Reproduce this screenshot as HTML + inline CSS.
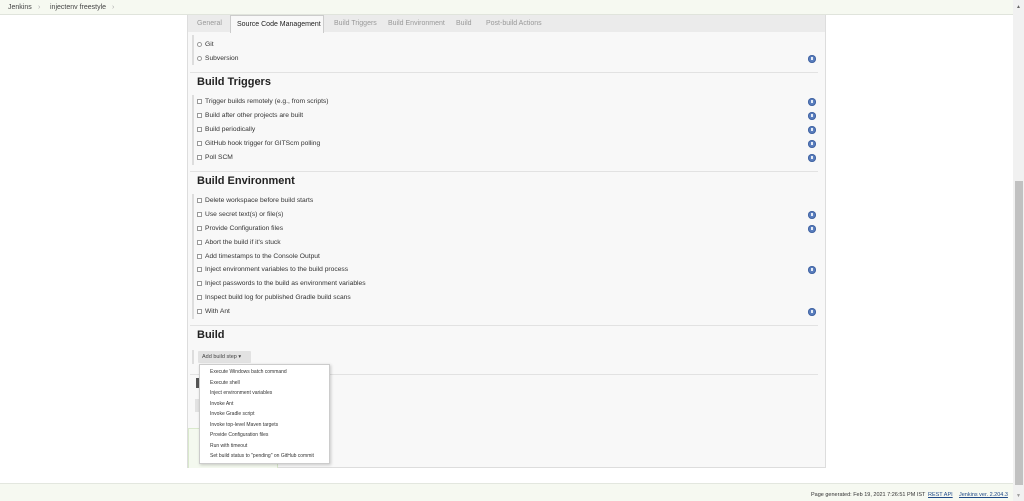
<!DOCTYPE html>
<html><head><meta charset="utf-8"><style>
*{margin:0;padding:0;box-sizing:border-box}
body{width:1024px;height:501px;overflow:hidden;background:#fff;font-family:"Liberation Sans",sans-serif;color:#333;position:relative}
.abs{position:absolute}
.crumb{left:0;top:0;width:1013px;height:15px;background:#f6f9f1;border-bottom:1px solid #e0e4dc;font-size:7px;color:#444}
.crumb span{position:absolute;top:4px}
.panel{left:187px;top:15px;width:639px;height:453px;background:#f8f8f8;border:1px solid #ddd;border-top:none}
.tabs{left:188px;top:15px;width:637px;height:17px;background:#ebebeb;font-size:7px;color:#999}
.tabs span{position:absolute;top:5px}
.tab-act{position:absolute;left:42px;top:0;width:94px;height:18px;background:#f8f8f8;border:1px solid #ccc;border-bottom:none;color:#222}
.item{position:absolute;left:197px;font-size:6.7px;color:#333}
.item i{display:inline-block;width:5px;height:5px;border:1px solid #999;margin-right:3px;vertical-align:-0.5px;background:#fff}
.item i.r{border-radius:50%}
.h{position:absolute;left:197px;font-size:11px;font-weight:bold;color:#222}
.sep{position:absolute;left:190px;width:628px;height:1px;background:#e2e2e2}
.bar{position:absolute;left:192px;width:2px;background:#ddd}
.help{position:absolute;left:808px;width:8px;height:8px;border-radius:50%;background:#5b7fbf;box-shadow:inset 0 0 0 1px #4466a3}
.help:after{content:"";position:absolute;left:3px;top:2px;width:2px;height:3px;background:#e4ebf6}
.btn{position:absolute;left:198px;top:351px;width:53px;height:12px;background:#e2e2e2;border-radius:1px;font-size:5.5px;color:#444;padding:3px 0 0 4px}
.menu{left:199px;top:364px;width:131px;height:100px;background:#fff;border:1px solid #ccc;box-shadow:1px 1px 3px rgba(0,0,0,.2);font-size:5px;color:#333}
.menu div{position:absolute;left:10px}
.foot{left:0;top:483px;width:1013px;height:18px;background:#f6f9f1;border-top:1px solid #e3e7df;font-size:5.5px;color:#333}
.foot a{color:#204a87;text-decoration:underline;position:absolute;top:8px}
.sb{left:1013px;top:0;width:11px;height:501px;background:#f1f1f1}
</style></head><body>
<div class="abs crumb"><span style="left:8px">Jenkins</span><span style="left:38px;color:#aaa">›</span><span style="left:50px">injectenv freestyle</span><span style="left:112px;color:#aaa">›</span></div>

<div class="abs panel"></div>
<div class="abs tabs">
<span style="left:9px">General</span>
<div class="tab-act"><span style="position:absolute;left:6px;top:5px">Source Code Management</span></div>
<span style="left:146px">Build Triggers</span>
<span style="left:200px">Build Environment</span>
<span style="left:268px">Build</span>
<span style="left:298px">Post-build Actions</span>
</div>

<div class="bar" style="top:35px;height:30px"></div>
<div class="item" style="top:41px"><i class="r"></i>Git</div>
<div class="item" style="top:55px"><i class="r"></i>Subversion</div>
<div class="help" style="top:55px"></div>
<div class="sep" style="top:72px"></div>

<div class="h" style="top:76px">Build Triggers</div>
<div class="bar" style="top:95px;height:70px"></div>
<div class="item" style="top:98px"><i></i>Trigger builds remotely (e.g., from scripts)</div>
<div class="item" style="top:112px"><i></i>Build after other projects are built</div>
<div class="item" style="top:126px"><i></i>Build periodically</div>
<div class="item" style="top:140px"><i></i>GitHub hook trigger for GITScm polling</div>
<div class="item" style="top:154px"><i></i>Poll SCM</div>
<div class="help" style="top:98px"></div><div class="help" style="top:112px"></div><div class="help" style="top:126px"></div><div class="help" style="top:140px"></div><div class="help" style="top:154px"></div>
<div class="sep" style="top:171px"></div>

<div class="h" style="top:175px">Build Environment</div>
<div class="bar" style="top:194px;height:125px"></div>
<div class="item" style="top:197px"><i></i>Delete workspace before build starts</div>
<div class="item" style="top:211px"><i></i>Use secret text(s) or file(s)</div>
<div class="item" style="top:225px"><i></i>Provide Configuration files</div>
<div class="item" style="top:239px"><i></i>Abort the build if it's stuck</div>
<div class="item" style="top:253px"><i></i>Add timestamps to the Console Output</div>
<div class="item" style="top:266px"><i></i>Inject environment variables to the build process</div>
<div class="item" style="top:280px"><i></i>Inject passwords to the build as environment variables</div>
<div class="item" style="top:294px"><i></i>Inspect build log for published Gradle build scans</div>
<div class="item" style="top:308px"><i></i>With Ant</div>
<div class="help" style="top:211px"></div><div class="help" style="top:225px"></div><div class="help" style="top:266px"></div><div class="help" style="top:308px"></div>
<div class="sep" style="top:325px"></div>

<div class="h" style="top:329px">Build</div>
<div class="bar" style="top:350px;height:14px"></div>
<div class="btn">Add build step &#9662;</div>
<div class="sep" style="top:374px"></div>
<div class="abs" style="left:196px;top:378px;width:4px;height:10px;background:#555"></div>
<div class="abs" style="left:195px;top:399px;width:10px;height:13px;background:#e2e2e2"></div>
<div class="abs" style="left:188px;top:428px;width:90px;height:40px;background:#f4f9ef;border:1px solid #d9e8cc;border-bottom:none"></div>

<div class="abs menu">
<div style="top:4px">Execute Windows batch command</div>
<div style="top:14.5px">Execute shell</div>
<div style="top:25px">Inject environment variables</div>
<div style="top:35.5px">Invoke Ant</div>
<div style="top:46px">Invoke Gradle script</div>
<div style="top:56.5px">Invoke top-level Maven targets</div>
<div style="top:67px">Provide Configuration files</div>
<div style="top:77.5px">Run with timeout</div>
<div style="top:88px">Set build status to "pending" on GitHub commit</div>
</div>

<div class="abs foot"><span style="position:absolute;left:811px;top:8px">Page generated: Feb 19, 2021 7:26:51 PM IST</span><a style="left:928px">REST API</a><a style="left:959px">Jenkins ver. 2.204.3</a></div>

<div class="abs sb"><div class="abs" style="left:2px;top:181px;width:8px;height:304px;background:#c1c1c1"></div>
<div class="abs" style="left:3px;top:4px;font-size:5px;color:#666">&#9650;</div>
<div class="abs" style="left:3px;top:493px;font-size:5px;color:#999">&#9660;</div></div>
</body></html>
